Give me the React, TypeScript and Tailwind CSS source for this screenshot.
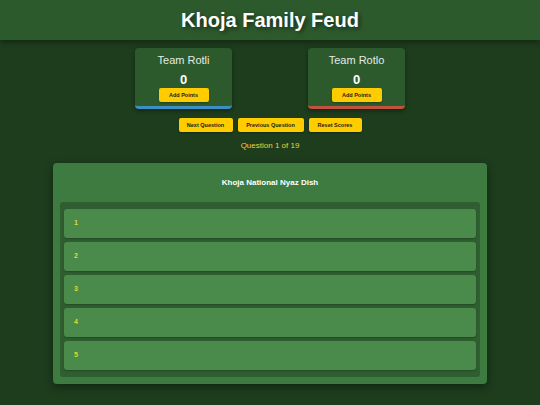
import React from "react";

const teams = [
  { name: "Team Rotli", score: 0, edge: "border-b-[#3b8fc4]" },
  { name: "Team Rotlo", score: 0, edge: "border-b-[#c0533d]" },
];

const answers = [1, 2, 3, 4, 5];

function TeamCard({ name, score, edge }: { name: string; score: number; edge: string }) {
  return (
    <div
      className={`w-[97px] h-[61px] rounded-[4px] bg-[#2d5a2d] border-b-[3px] ${edge} shadow-[0_2px_4px_rgba(0,0,0,0.35)] flex flex-col items-center pt-[6px]`}
    >
      <div className="text-[11px] leading-[13px] text-[#e4ebe4]">{name}</div>
      <div className="mt-[5px] text-[13px] leading-[15px] font-bold text-white">{score}</div>
      <button className="mt-[1px] h-[14px] w-[50px] rounded-[2px] bg-[#ffcc00] text-[5.5px] font-bold text-[#1a1a1a] shadow-[0_1px_2px_rgba(0,0,0,0.3)]">
        Add Points
      </button>
    </div>
  );
}

function ControlButton({ label, width }: { label: string; width: string }) {
  return (
    <button
      className={`${width} h-[14px] rounded-[2px] bg-[#ffcc00] text-[5.5px] font-bold text-[#1a1a1a] shadow-[0_1px_2px_rgba(0,0,0,0.3)]`}
    >
      {label}
    </button>
  );
}

export default function App() {
  return (
    <div className="min-h-screen bg-[#1d3d1d] font-['Liberation_Sans',Arial,sans-serif]">
      <header className="h-[40px] bg-[#2d5a2d] shadow-[0_2px_6px_rgba(0,0,0,0.4)] flex items-center justify-center">
        <h1 className="text-[20px] font-bold text-white [text-shadow:2px_2px_4px_rgba(0,0,0,0.5)]">
          Khoja Family Feud
        </h1>
      </header>

      <div className="flex justify-center gap-[76px] pt-[8px]">
        {teams.map((t) => (
          <TeamCard key={t.name} {...t} />
        ))}
      </div>

      <div className="mt-[9px] flex justify-center gap-[5px]">
        <ControlButton label="Next Question" width="w-[54px]" />
        <ControlButton label="Previous Question" width="w-[66px]" />
        <ControlButton label="Reset Scores" width="w-[53px]" />
      </div>

      <p className="mt-[9px] text-center text-[8px] leading-[10px] text-[#ecd43a]">Question 1 of 19</p>

      <section className="mx-auto mt-[12px] w-[434px] rounded-[4px] bg-[#3e7b40] px-[7px] pt-[15px] pb-[7px] shadow-[0_3px_8px_rgba(0,0,0,0.4)]">
        <h2 className="text-center text-[8px] leading-[10px] font-bold text-white">Khoja National Nyaz Dish</h2>
        <div className="mt-[14px] rounded-[3px] bg-[#2f5f30] px-[4px] py-[7px] flex flex-col gap-[4px]">
          {answers.map((n) => (
            <div
              key={n}
              className="h-[29px] rounded-[3px] bg-[#4a8a4a] flex items-center pl-[10px] shadow-[0_1px_2px_rgba(0,0,0,0.25)]"
            >
              <span className="text-[7px] font-bold text-[#e0d830]">{n}</span>
            </div>
          ))}
        </div>
      </section>
    </div>
  );
}
